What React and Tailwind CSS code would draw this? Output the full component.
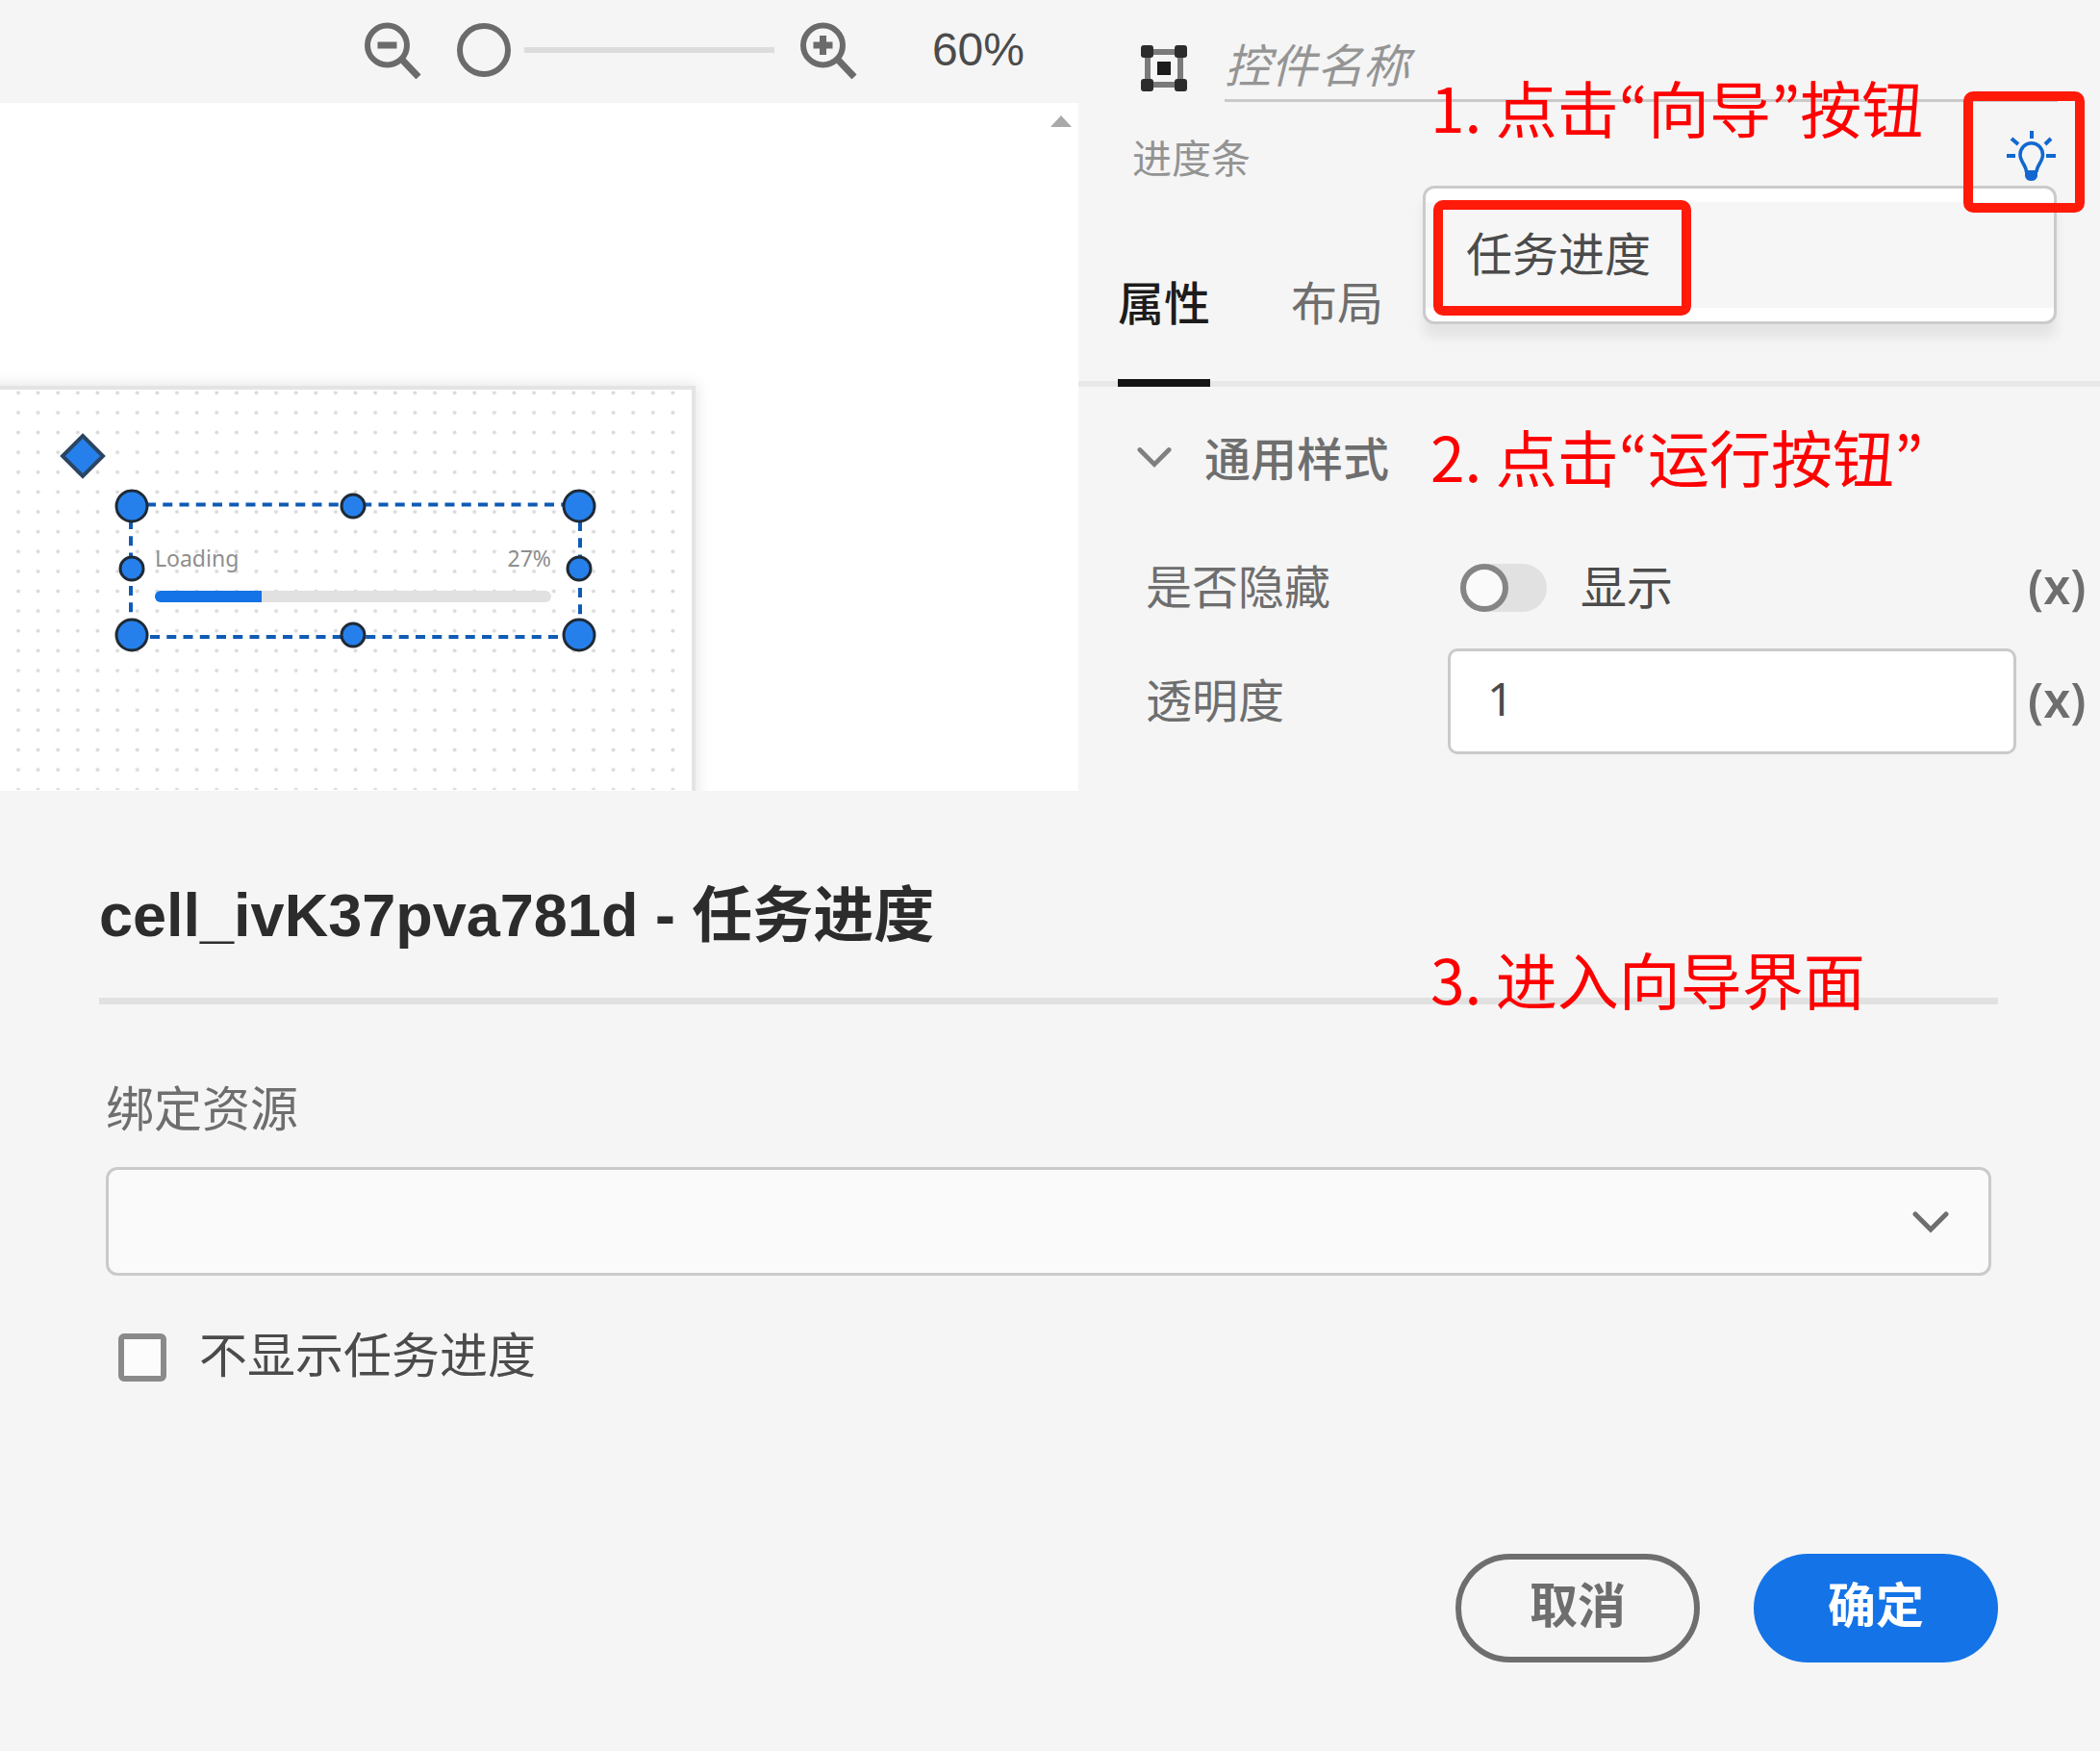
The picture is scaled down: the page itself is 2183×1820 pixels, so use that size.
import { useState } from 'react'

const HANDLES = [
  { x: 137, y: 526, r: 16 },
  { x: 367, y: 526, r: 12 },
  { x: 602, y: 526, r: 16 },
  { x: 137, y: 591, r: 12 },
  { x: 602, y: 591, r: 12 },
  { x: 137, y: 660, r: 16 },
  { x: 367, y: 660, r: 12 },
  { x: 602, y: 660, r: 16 },
]

function ZoomIcon({ plus }) {
  return (
    <svg viewBox="0 0 60 60" className="h-[60px] w-[60px]" fill="none" stroke="#6b6b6b" strokeWidth="7">
      <circle cx="23.5" cy="25" r="20.5" strokeWidth="6" />
      <path d="M38 39 L56 58" />
      <path d="M13.5 25 H33.5" />
      {plus ? <path d="M23.5 15 V35" /> : null}
    </svg>
  )
}

function WidgetIcon() {
  return (
    <svg viewBox="0 0 48 48" className="mt-[6px] h-12 w-12 shrink-0" fill="#2c2c2c">
      <rect x="7" y="7" width="34" height="34" fill="none" stroke="#7a7a7a" strokeWidth="6" />
      <rect x="0" y="0" width="13" height="13" rx="3" />
      <rect x="35" y="0" width="13" height="13" rx="3" />
      <rect x="0" y="35" width="13" height="13" rx="3" />
      <rect x="35" y="35" width="13" height="13" rx="3" />
      <rect x="17" y="17" width="14" height="14" fill="#1c1c1c" />
    </svg>
  )
}

function BulbIcon() {
  return (
    <svg viewBox="0 0 52 52" className="h-[52px] w-[52px]" fill="none" stroke="#1268d0" strokeWidth="4">
      <path d="M26 0 V8 M5 8 L12 14 M46 8 L40 14 M0 26 H9 M41 26 H51" />
      <path d="M20.5 43 C20.5 36 14 32 14 25 A11.5 12 0 0 1 37.5 25 C37.5 32 31 36 31 43" strokeWidth="3.6" />
      <path d="M19 41 H32 V47 Q31 52 25.500 52 Q20 52 19 47 Z" fill="#1268d0" stroke="none" />
    </svg>
  )
}

function Chevron({ className, color }) {
  return (
    <svg viewBox="0 0 38 24" className={className} fill="none" stroke={color} strokeWidth="5">
      <path d="M3 3 L19 19 L35 3" strokeLinecap="round" />
    </svg>
  )
}

// the Korean face has the narrow quotation marks
function Quote({ children }) {
  return <span className="font-['Noto_Sans_CJK_KR',sans-serif]">{children}</span>
}

function Canvas() {
  return (
    <div className="relative h-[715px] overflow-hidden bg-white">
      <svg viewBox="0 0 22 12" className="absolute top-[13px] right-[7px] h-[12px] w-[22px]" fill="#a9a9a9">
        <path d="M11 0 L22 12 H0 Z" />
      </svg>

      <div className="absolute top-[298px] left-[-20px] h-[500px] w-[739px] bg-white shadow-[0_0_0_4px_#e4e4e4,0_0_14px_6px_#e6e6e6]" />

      <svg viewBox="0 107 740 714" className="absolute top-0 left-0 h-[714px] w-[740px]">
        <defs>
          <pattern id="dots" x="8.7" y="398" width="20.62" height="20.62" patternUnits="userSpaceOnUse">
            <circle cx="10.3" cy="10.3" r="2" fill="#dadada" />
          </pattern>
        </defs>
        <rect x="8" y="405" width="708" height="416" fill="url(#dots)" />
        <path d="M86 453 L107 474 L86 495 L65 474 Z" fill="#2680eb" stroke="#2a4562" strokeWidth="4" />
        <g stroke="#0f5bb5" strokeWidth="4" strokeDasharray="10 7.25">
          <path d="M152 524.5 H603" />
          <path d="M156 662 H603" />
          <path d="M136 540 V662" />
          <path d="M603 542 V662" />
        </g>
        {HANDLES.map((h) => (
          <circle key={`${h.x}-${h.y}`} cx={h.x} cy={h.y} r={h.r} fill="#2680eb" stroke="#1f2a36" strokeWidth="3" />
        ))}
      </svg>

      <div className="absolute top-[453px] left-[161px] w-[412px]">
        <div className="flex justify-between font-['Noto_Sans',sans-serif] text-[23px] leading-[40px] text-[#8e8e8e]">
          <span>Loading</span>
          <span>27%</span>
        </div>
        <div className="mt-[14px] h-[12px] overflow-hidden rounded-full bg-[#e1e1e1]">
          <div className="h-full bg-[#1473e6]" style={{ width: '27%' }} />
        </div>
      </div>
    </div>
  )
}

function Editor() {
  const [zoom, setZoom] = useState(0)

  return (
    <div>
      <div className="flex h-[107px] items-center justify-end pr-[56px] pb-1">
        <button aria-label="缩小">
          <ZoomIcon />
        </button>
        <input
          type="range"
          aria-label="缩放"
          min="0"
          max="100"
          value={zoom}
          onChange={(e) => setZoom(e.target.value)}
          className="mr-[27px] ml-[36px] h-[56px] w-[330px] appearance-none bg-transparent [&::-webkit-slider-runnable-track]:h-[6px] [&::-webkit-slider-runnable-track]:bg-[#dcdcdc] [&::-webkit-slider-thumb]:mt-[-25px] [&::-webkit-slider-thumb]:h-[56px] [&::-webkit-slider-thumb]:w-[56px] [&::-webkit-slider-thumb]:appearance-none [&::-webkit-slider-thumb]:rounded-full [&::-webkit-slider-thumb]:border-[6px] [&::-webkit-slider-thumb]:border-[#6b6b6b] [&::-webkit-slider-thumb]:bg-[#f5f5f5] [&::-webkit-slider-thumb]:shadow-[0_0_0_14px_#f5f5f5]"
        />
        <button aria-label="放大">
          <ZoomIcon plus />
        </button>
        <span className="ml-[77px] font-['Liberation_Sans',sans-serif] text-[48px] leading-[56px] text-[#4b4b4b]">60%</span>
      </div>
      <Canvas />
    </div>
  )
}

function Panel() {
  const [hidden, setHidden] = useState(false)
  const [opacity, setOpacity] = useState('1')

  return (
    <div className="relative pt-[30px] text-[48px] leading-[72px] text-[#6e6e6e]">
      <div className="flex items-center gap-[39px] pr-[44px] pl-[65px]">
        <WidgetIcon />
        <input
          aria-label="控件名称"
          placeholder="控件名称"
          className="h-[76px] min-w-0 flex-1 border-b-[3px] border-[#c9c9c9] bg-transparent pb-1 italic outline-none placeholder:text-[#959595]"
        />
      </div>

      <div className="relative flex items-center justify-between pt-[30px] pr-[45px] pl-[56px]">
        <span className="text-[41px] leading-[52px] text-[#939393]">进度条</span>
        <button aria-label="向导">
          <BulbIcon />
        </button>
        <div className="absolute top-full right-[45px] z-10 mt-[5px] w-[659px] rounded-[12px] border-[3px] border-[#cbcbcb] bg-white py-[14px] shadow-[0_14px_12px_0_rgba(0,0,0,0.07)]">
          <button className="h-[110px] w-full bg-[#f6f6f6] px-[42px] pb-2 text-left text-[#4b4b4b]">任务进度</button>
          <div className="absolute top-[12px] left-[8px] h-[120px] w-[268px] rounded-[10px] border-[10px] border-[#ff1a0a]" />
        </div>
        <div className="absolute right-[16px] bottom-[-33px] z-20 h-[126px] w-[126px] rounded-[10px] border-[10px] border-[#ff1a0a]" />
      </div>

      <nav className="mt-[88px] flex gap-[84px] border-b-[6px] border-[#e8e8e8] pl-[41px]">
        <button className="-mb-[6px] border-b-[8px] border-[#141414] pb-[46px] font-medium text-[#1c1c1c]">属性</button>
        <button className="-mb-[6px] border-b-[8px] border-transparent pb-[46px]">布局</button>
      </nav>

      <button className="mt-[36px] flex items-center gap-[34px] pl-[61px] font-medium">
        <Chevron className="mt-1 h-[24px] w-[36px]" color="#808080" />
        通用样式
      </button>

      <div className="mt-[61px] grid grid-cols-[302px_1fr_60px] items-center gap-x-[12px] pr-[15px] pl-[70px]">
        <label htmlFor="hidden" className="pb-2">
          是否隐藏
        </label>
        <div className="flex items-center gap-[35px] pl-[13px] text-[#4b4b4b]">
          <input
            id="hidden"
            type="checkbox"
            role="switch"
            checked={hidden}
            onChange={(e) => setHidden(e.target.checked)}
            className="h-[50px] w-[90px] appearance-none rounded-full bg-[#e1e1e1] before:block before:h-[50px] before:w-[50px] before:rounded-full before:border-[6px] before:border-[#858585] before:bg-[#fafafa] checked:before:ml-auto"
          />
          <span className="pb-2">{hidden ? '隐藏' : '显示'}</span>
        </div>
        <button className="pb-1 font-['Noto_Sans',sans-serif] text-[50px] font-semibold">(x)</button>
      </div>

      <div className="mt-[23px] grid grid-cols-[302px_1fr_60px] items-center gap-x-[12px] pr-[15px] pl-[70px]">
        <label htmlFor="opacity" className="pb-2">
          透明度
        </label>
        <input
          id="opacity"
          value={opacity}
          onChange={(e) => setOpacity(e.target.value)}
          className="h-[110px] w-full min-w-0 rounded-[10px] border-[3px] border-[#cacaca] bg-white px-[38px] pb-2 font-['Noto_Sans',sans-serif] text-[#4b4b4b] outline-none"
        />
        <button className="pb-1 font-['Noto_Sans',sans-serif] text-[50px] font-semibold">(x)</button>
      </div>

      <p className="absolute top-[70px] left-[366px] z-20 text-[64px] leading-[80px] whitespace-nowrap text-[#ff0000]">
        1. 点击<Quote>“</Quote>向导<Quote>”</Quote>按钮
      </p>
      <p className="absolute top-[433px] left-[366px] z-20 text-[64px] leading-[80px] whitespace-nowrap text-[#ff0000]">
        2. 点击<Quote>“</Quote>运行按钮<Quote>”</Quote>
      </p>
    </div>
  )
}

function WizardDialog() {
  const [noProgress, setNoProgress] = useState(false)

  return (
    <section className="relative pt-[89px] pr-[106px] pb-[91px] pl-[103px]">
      <h2 className="font-['Liberation_Sans','Noto_Sans_CJK_SC',sans-serif] text-[63px] leading-[80px] font-bold text-[#2c2c2c]">
        cell_ivK37pva781d - 任务进度
      </h2>
      <div className="mt-[46px] h-[7px] bg-[#e1e1e1]" />
      <p className="absolute top-[154px] left-[1487px] text-[64px] leading-[80px] whitespace-nowrap text-[#ff0000]">3. 进入向导界面</p>

      <div className="mt-[75px] px-[7px] text-[50px]">
        <label htmlFor="resource" className="block leading-[60px] text-[#6e6e6e]">
          绑定资源
        </label>
        <div className="relative mt-[34px]">
          <select id="resource" className="block h-[113px] w-full appearance-none rounded-[12px] border-[3px] border-[#cacaca] bg-[#fafafa] px-[38px] outline-none">
            <option value=""></option>
          </select>
          <Chevron className="pointer-events-none absolute top-[46px] right-[44px] h-[24px] w-[38px]" color="#6e6e6e" />
        </div>

        <div className="mt-[60px] flex h-[50px] items-center gap-[34px] pl-[13px] text-[#4b4b4b]">
          <input
            id="no-progress"
            type="checkbox"
            checked={noProgress}
            onChange={(e) => setNoProgress(e.target.checked)}
            className="h-[50px] w-[50px] appearance-none rounded-[6px] border-[6px] border-[#8a8a8a] bg-[#fcfcfc] checked:bg-[#1473e6]"
          />
          <label htmlFor="no-progress" className="pb-3">
            不显示任务进度
          </label>
        </div>
      </div>

      <div className="mt-[179px] flex justify-end gap-[56px] text-[50px] font-bold">
        <button className="h-[113px] w-[254px] rounded-full border-[6px] border-[#6e6e6e] pb-3 text-[#6e6e6e]">取消</button>
        <button className="h-[113px] w-[254px] rounded-full bg-[#1473e6] pb-3 text-white">确定</button>
      </div>
    </section>
  )
}

export default function App() {
  return (
    <div className="min-h-screen bg-[#f5f5f5] font-['Noto_Sans_CJK_SC',sans-serif]">
      <div className="grid grid-cols-[1121fr_1062fr]">
        <Editor />
        <Panel />
      </div>
      <WizardDialog />
    </div>
  )
}
